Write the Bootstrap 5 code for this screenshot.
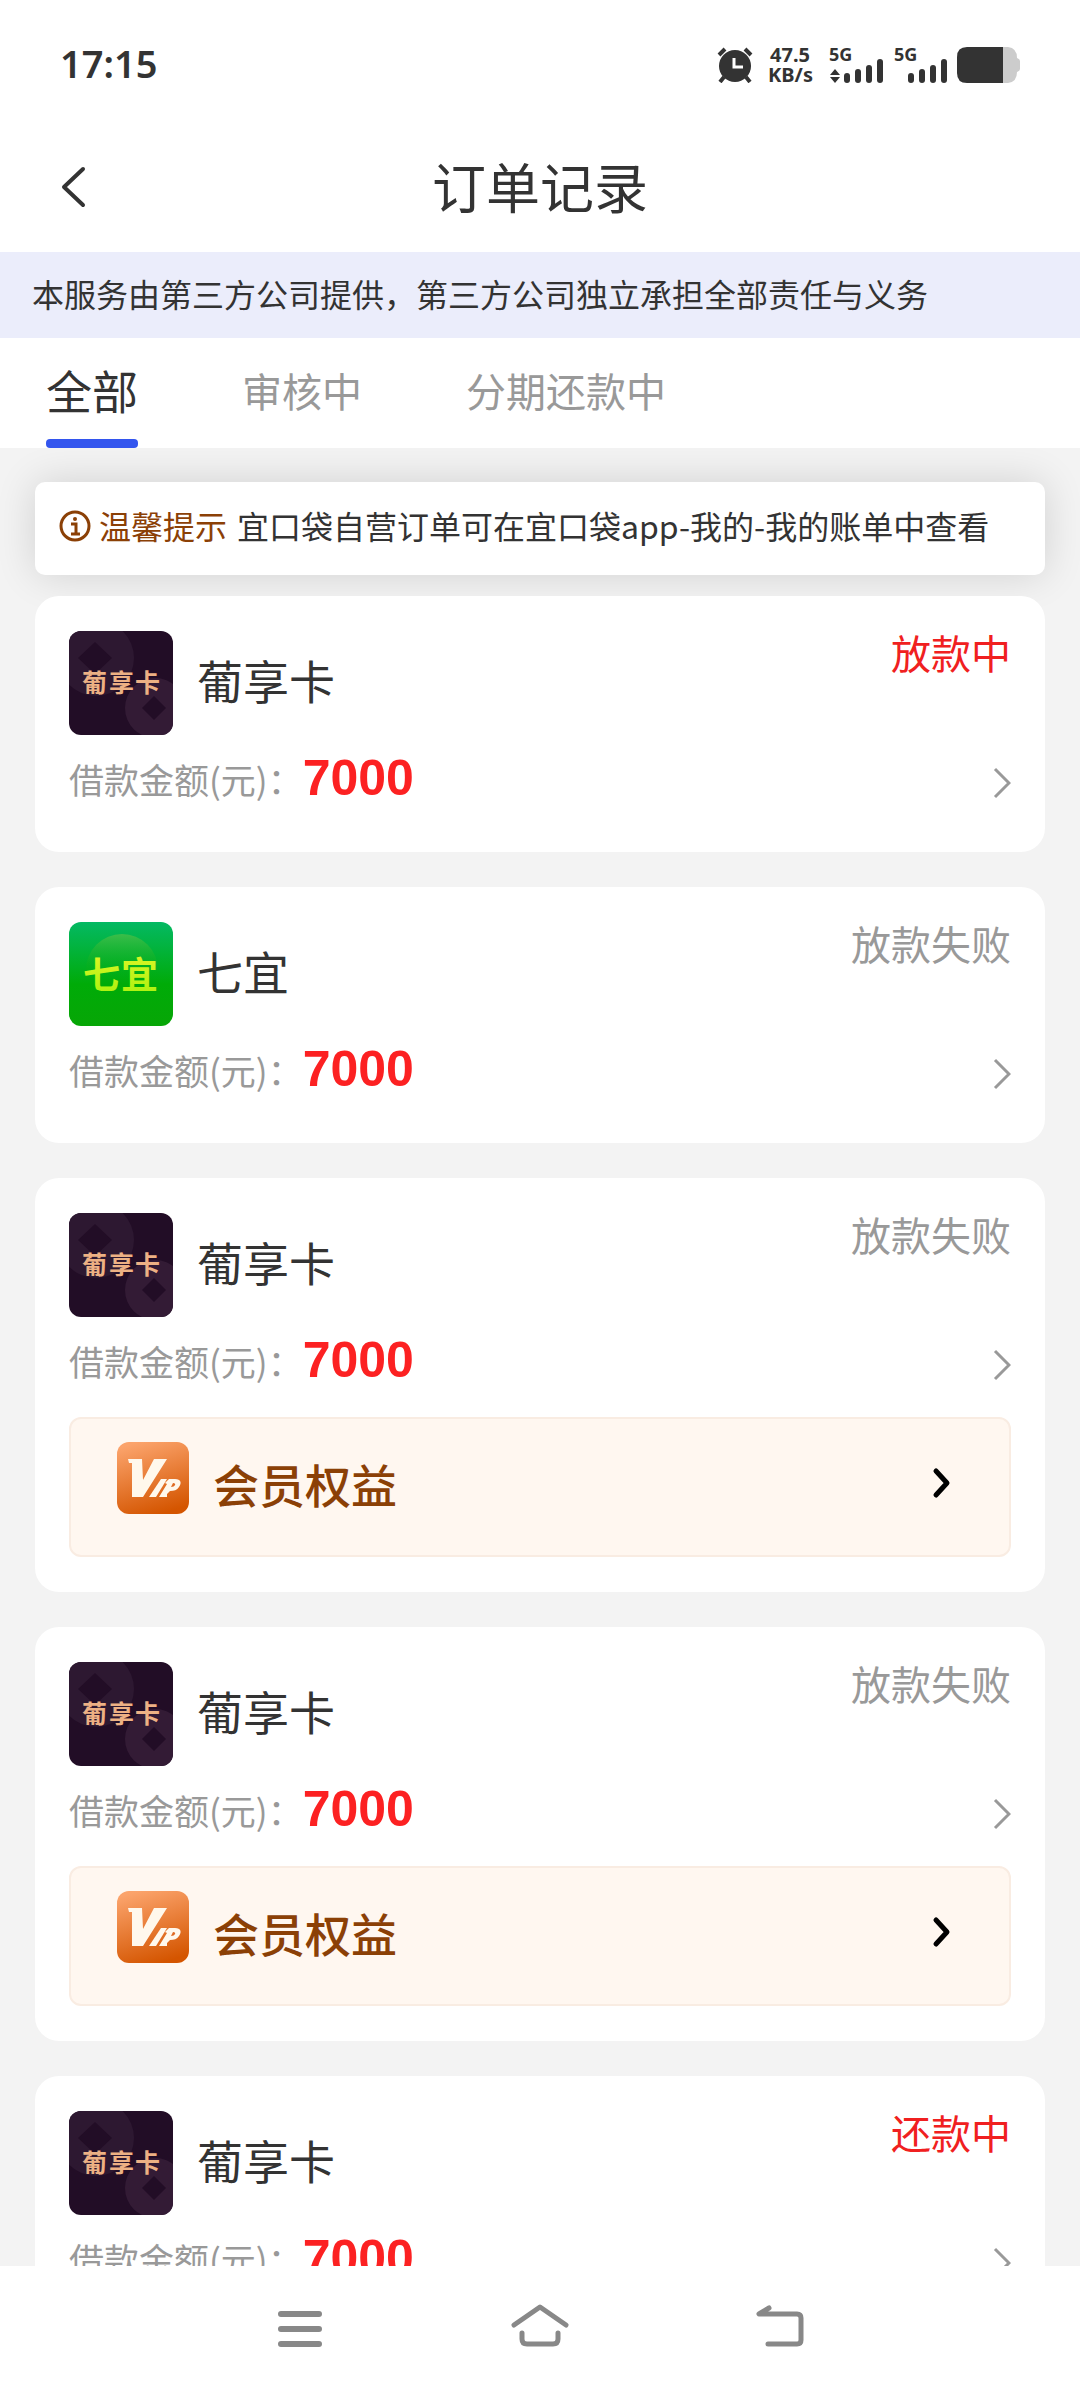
<!DOCTYPE html>
<html lang="zh-CN">
<head>
<meta charset="utf-8">
<meta name="viewport" content="width=device-width, initial-scale=1">
<title>订单记录</title>
<link rel="stylesheet" href="https://cdn.jsdelivr.net/npm/bootstrap@5.3.0/dist/css/bootstrap.min.css">
<style>
  body { font-family: "Noto Sans CJK SC", sans-serif; color: #333; background: #f3f3f3; }
  a { color: inherit; text-decoration: none; }
  svg { display: block; flex: none; }

  .status-bar { height: 130px; padding: 0 59px 0 60px; }
  .clock { font-family: "Noto Sans", sans-serif; font-size: 38px; font-weight: 600; line-height: 40px; padding-bottom: 4px; }
  .net-speed { font-family: "Noto Sans", sans-serif; font-size: 20px; font-weight: 700; line-height: 20px; width: 44px; margin: 0 17px 0 15px; }
  .sig-label { font-family: "Noto Sans", sans-serif; font-size: 18px; font-weight: 700; }

  .title-bar { height: 122px; padding: 0 58px 8px; }
  .title-bar .side { width: 60px; }
  .page-title { font-size: 54px; line-height: 60px; font-weight: 400; padding-bottom: 2px; }

  .notice { background: #ebedfb; font-size: 32px; line-height: 82px; padding: 0 32px 4px; }

  .tabs { height: 110px; padding: 0 46px; gap: 104px; }
  .tabs .nav-link { padding: 0; height: 110px; font-size: 40px; line-height: 104px; color: #999; }
  .tabs .nav-link.active { font-size: 46px; line-height: 102px; color: #333; position: relative; }
  .tabs .nav-link.active::after { content: ""; position: absolute; left: 0; right: 0; bottom: 0; height: 9px; border-radius: 4px; background: #3355ee; }

  .list-area { padding: 34px 35px; min-height: 0; scrollbar-width: none; }
  .list-area::-webkit-scrollbar { display: none; }
  .tip { background: #fff; border-radius: 10px; padding: 0 24px 6px; margin-bottom: 21px; font-size: 32px; line-height: 87px; box-shadow: 0 0 40px rgba(0, 0, 0, .14); }
  .tip-title { color: #8b4006; margin: 0 10px 0 8px; }

  .order { background: #fff; border-radius: 24px; padding: 35px 34px; margin-bottom: 35px; position: relative; }
  .logo { width: 104px; height: 104px; border-radius: 12px; overflow: hidden; }
  .order-name { font-size: 46px; line-height: 96px; margin-left: 24px; }
  .order-state { font-size: 40px; line-height: 42px; color: #999; }
  .order-state.hot { color: #f02020; }
  .amount-row { margin-top: 13px; height: 69px; }
  .amount-label { font-size: 35px; color: #999; line-height: 60px; padding-bottom: 8px; }
  .amount { font-family: "Liberation Sans", sans-serif; font-size: 50px; line-height: 58px; font-weight: 700; color: #fc2122; padding-bottom: 10px; }
  .vip { margin-top: 18px; height: 140px; border: 2px solid #f9ece2; border-radius: 12px; background: #fff7f0; padding: 0 57px 8px 46px; color: #8b4006; }
  .vip-icon { margin-bottom: 10px; }
  .vip-text { font-size: 46px; line-height: 60px; font-weight: 500; margin-left: 24px; }

  .system-nav { height: 126px; }
  .system-nav button { border: 0; background: none; padding: 0; width: 240px; height: 126px; }
</style>
</head>
<body>
<svg width="0" height="0" class="position-absolute" aria-hidden="true">
  <defs>
    <linearGradient id="gGreen" x1="0" y1="0" x2="0" y2="1"><stop offset="0" stop-color="#04b963"/><stop offset=".6" stop-color="#00ab08"/><stop offset="1" stop-color="#07a606"/></linearGradient>
    <linearGradient id="gBall" x1="0" y1="0" x2="0" y2="1"><stop offset="0" stop-color="#3cbd4a"/><stop offset=".6" stop-color="#00ab08" stop-opacity="0"/></linearGradient>
    <linearGradient id="gLime" x1="0" y1="0" x2="0" y2="1"><stop offset="0" stop-color="#e6f52a"/><stop offset="1" stop-color="#a4f20c"/></linearGradient>
    <linearGradient id="gVip" x1=".3" y1="0" x2=".6" y2="1"><stop offset="0" stop-color="#fba36b"/><stop offset="1" stop-color="#d45500"/></linearGradient>
    <symbol id="logoPu" viewBox="0 0 104 104">
      <rect width="104" height="104" fill="#220d26"/>
      <circle cx="27" cy="27" r="38" fill="#2d1831"/>
      <path d="M26 11 43 27 26 43 9 27z" fill="#220d26"/>
      <circle cx="86" cy="77" r="30" fill="#331b35"/>
      <path d="M85 65 97 77 85 89 73 77z" fill="#220d26"/>
      <text y="61" font-family="Noto Sans CJK SC, sans-serif" font-weight="700" font-size="25" fill="#edb184"><tspan x="13">葡</tspan><tspan x="40">享</tspan><tspan x="66">卡</tspan></text>
    </symbol>
    <symbol id="logoQi" viewBox="0 0 104 104">
      <rect width="104" height="104" fill="url(#gGreen)"/>
      <circle cx="53" cy="48" r="36" fill="url(#gBall)"/>
      <text y="67" font-family="Noto Sans CJK SC, sans-serif" font-weight="700" font-size="37" fill="url(#gLime)"><tspan x="14">七</tspan><tspan x="52">宜</tspan></text>
    </symbol>
    <symbol id="vipMark" viewBox="0 0 72 72">
      <rect width="72" height="72" rx="12" fill="url(#gVip)"/>
      <path d="M11 17H25L26 38 37 17H50L26 55H15V21H12z" fill="#fff8ec"/>
      <path d="M44 37H50L39 55H32z" fill="#fff8ec"/>
      <path d="M52 37H58C64 37 65 41 62 45 60 48 57 49 53 49L50 52V55H42L50 42 48 41z" fill="#fff8ec"/>
      <path d="M56 41 54 45C58 45 60 41 56 41z" fill="#df6a22"/>
    </symbol>
    <symbol id="chevThin" viewBox="0 0 20 32"><path d="M4 2 18 16 4 30" fill="none" stroke="#999" stroke-width="3"/></symbol>
    <symbol id="chevBold" viewBox="0 0 20 32"><path d="M4 4 15 16 4 28" fill="none" stroke="#000" stroke-width="5" stroke-linecap="round" stroke-linejoin="round"/></symbol>
  </defs>
</svg>

<div class="d-flex flex-column vh-100">
  <div class="bg-white">
    <div class="status-bar d-flex align-items-center justify-content-between">
      <span class="clock">17:15</span>
      <div class="d-flex align-items-center">
        <svg width="36" height="36" viewBox="0 0 36 36" fill="none" stroke="#333"><circle cx="18" cy="19" r="16" fill="#333" stroke="none"/><path d="M2 8 8 2M34 8 28 2" stroke-width="4"/><path d="M7 30 3 35M29 30 33 35" stroke-width="4"/><path d="M17 11V20H26" stroke="#fff" stroke-width="3"/></svg>
        <div class="net-speed text-center"><div>47.5</div><div>KB/s</div></div>
        <svg width="56" height="48" viewBox="0 -4 56 48" fill="#333"><text class="sig-label" x="0" y="16">5G</text><path d="M1 30 6 24 11 30zM1 32 6 38 11 32z"/><rect x="15" y="28" width="6" height="10" rx="3"/><rect x="26" y="24" width="6" height="14" rx="3"/><rect x="37" y="20" width="6" height="18" rx="3"/><rect x="48" y="14" width="6" height="24" rx="3"/></svg>
        <svg class="ms-2" width="56" height="48" viewBox="0 -4 56 48" fill="#333"><text class="sig-label" x="1" y="16">5G</text><rect x="15" y="28" width="6" height="10" rx="3"/><rect x="26" y="24" width="6" height="14" rx="3"/><rect x="37" y="20" width="6" height="18" rx="3"/><rect x="48" y="14" width="6" height="24" rx="3"/></svg>
        <svg class="ms-2" width="64" height="36" viewBox="0 0 64 36"><path d="M46 0H51Q60 1 60 11 63 12 63 14V22Q63 24 60 25 60 35 51 36H46z" fill="#ccc"/><path d="M10 0H46V36H10Q0 36 0 26V10Q0 0 10 0z" fill="#333"/></svg>
      </div>
    </div>
    <header class="title-bar d-flex align-items-center justify-content-between">
      <a href="#" class="side" aria-label="返回"><svg width="32" height="44" viewBox="0 0 32 44"><path d="M25 4 6 22 25 40" fill="none" stroke="#333" stroke-width="4" stroke-linecap="round" stroke-linejoin="round"/></svg></a>
      <h1 class="page-title m-0">订单记录</h1>
      <span class="side"></span>
    </header>
  </div>
  <div class="notice text-nowrap">本服务由第三方公司提供，第三方公司独立承担全部责任与义务</div>
  <nav class="tabs nav bg-white flex-nowrap">
    <a class="nav-link active" href="#">全部</a>
    <a class="nav-link" href="#">审核中</a>
    <a class="nav-link" href="#">分期还款中</a>
  </nav>

  <main class="list-area flex-grow-1 overflow-auto">
    <div class="tip d-flex align-items-center text-nowrap">
      <svg width="32" height="32" viewBox="0 0 32 32" fill="none" stroke="#8b4006"><circle cx="16" cy="16" r="14" stroke-width="3"/><circle cx="16" cy="9" r="2" fill="#8b4006" stroke="none"/><path d="M12 14H17V23M12 24H21" stroke-width="3"/></svg>
      <span class="tip-title">温馨提示</span>
      <span>宜口袋自营订单可在宜口袋app-我的-我的账单中查看</span>
    </div>

    <article class="order">
      <div class="d-flex align-items-start">
        <svg class="logo" role="img" aria-label="葡享卡"><use href="#logoPu"/></svg>
        <span class="order-name">葡享卡</span>
        <span class="order-state hot ms-auto">放款中</span>
      </div>
      <div class="amount-row d-flex align-items-center">
        <span class="amount-label">借款金额(元)：</span><span class="amount">7000</span>
        <a href="#" class="ms-auto stretched-link" aria-label="查看"><svg width="20" height="32"><use href="#chevThin"/></svg></a>
      </div>
    </article>

    <article class="order">
      <div class="d-flex align-items-start">
        <svg class="logo" role="img" aria-label="七宜"><use href="#logoQi"/></svg>
        <span class="order-name">七宜</span>
        <span class="order-state ms-auto">放款失败</span>
      </div>
      <div class="amount-row d-flex align-items-center">
        <span class="amount-label">借款金额(元)：</span><span class="amount">7000</span>
        <a href="#" class="ms-auto stretched-link" aria-label="查看"><svg width="20" height="32"><use href="#chevThin"/></svg></a>
      </div>
    </article>

    <article class="order">
      <div class="d-flex align-items-start">
        <svg class="logo" role="img" aria-label="葡享卡"><use href="#logoPu"/></svg>
        <span class="order-name">葡享卡</span>
        <span class="order-state ms-auto">放款失败</span>
      </div>
      <div class="amount-row d-flex align-items-center">
        <span class="amount-label">借款金额(元)：</span><span class="amount">7000</span>
        <a href="#" class="ms-auto" aria-label="查看"><svg width="20" height="32"><use href="#chevThin"/></svg></a>
      </div>
      <a href="#" class="vip d-flex align-items-center">
        <svg class="vip-icon" width="72" height="72"><use href="#vipMark"/></svg>
        <span class="vip-text">会员权益</span>
        <svg class="ms-auto" width="20" height="32"><use href="#chevBold"/></svg>
      </a>
    </article>

    <article class="order">
      <div class="d-flex align-items-start">
        <svg class="logo" role="img" aria-label="葡享卡"><use href="#logoPu"/></svg>
        <span class="order-name">葡享卡</span>
        <span class="order-state ms-auto">放款失败</span>
      </div>
      <div class="amount-row d-flex align-items-center">
        <span class="amount-label">借款金额(元)：</span><span class="amount">7000</span>
        <a href="#" class="ms-auto" aria-label="查看"><svg width="20" height="32"><use href="#chevThin"/></svg></a>
      </div>
      <a href="#" class="vip d-flex align-items-center">
        <svg class="vip-icon" width="72" height="72"><use href="#vipMark"/></svg>
        <span class="vip-text">会员权益</span>
        <svg class="ms-auto" width="20" height="32"><use href="#chevBold"/></svg>
      </a>
    </article>

    <article class="order">
      <div class="d-flex align-items-start">
        <svg class="logo" role="img" aria-label="葡享卡"><use href="#logoPu"/></svg>
        <span class="order-name">葡享卡</span>
        <span class="order-state hot ms-auto">还款中</span>
      </div>
      <div class="amount-row d-flex align-items-center">
        <span class="amount-label">借款金额(元)：</span><span class="amount">7000</span>
        <a href="#" class="ms-auto stretched-link" aria-label="查看"><svg width="20" height="32"><use href="#chevThin"/></svg></a>
      </div>
    </article>
  </main>

  <nav class="system-nav bg-white d-flex justify-content-center flex-shrink-0">
    <button type="button" class="d-flex align-items-center justify-content-center" aria-label="菜单"><svg width="46" height="38" viewBox="0 0 46 38"><path d="M4 4H42M4 19H42M4 34H42" stroke="#888" stroke-width="6" stroke-linecap="round"/></svg></button>
    <button type="button" class="d-flex align-items-center justify-content-center" aria-label="主页"><svg width="60" height="50" viewBox="0 0 60 50" fill="none" stroke="#888" stroke-width="5" stroke-linecap="round" stroke-linejoin="round"><path d="M4 21 30 3 56 21"/><path d="M12 29V35Q12 40 17 40H43Q48 40 48 35V29"/></svg></button>
    <button type="button" class="d-flex align-items-center justify-content-center" aria-label="返回"><svg width="50" height="50" viewBox="0 0 50 50" fill="none" stroke="#888" stroke-width="5" stroke-linecap="round" stroke-linejoin="round"><path d="M14 4 4 10H42Q46 10 46 14V36Q46 40 42 40H13"/></svg></button>
  </nav>
</div>
<script src="https://cdn.jsdelivr.net/npm/bootstrap@5.3.0/dist/js/bootstrap.bundle.min.js"></script>
</body>
</html>
